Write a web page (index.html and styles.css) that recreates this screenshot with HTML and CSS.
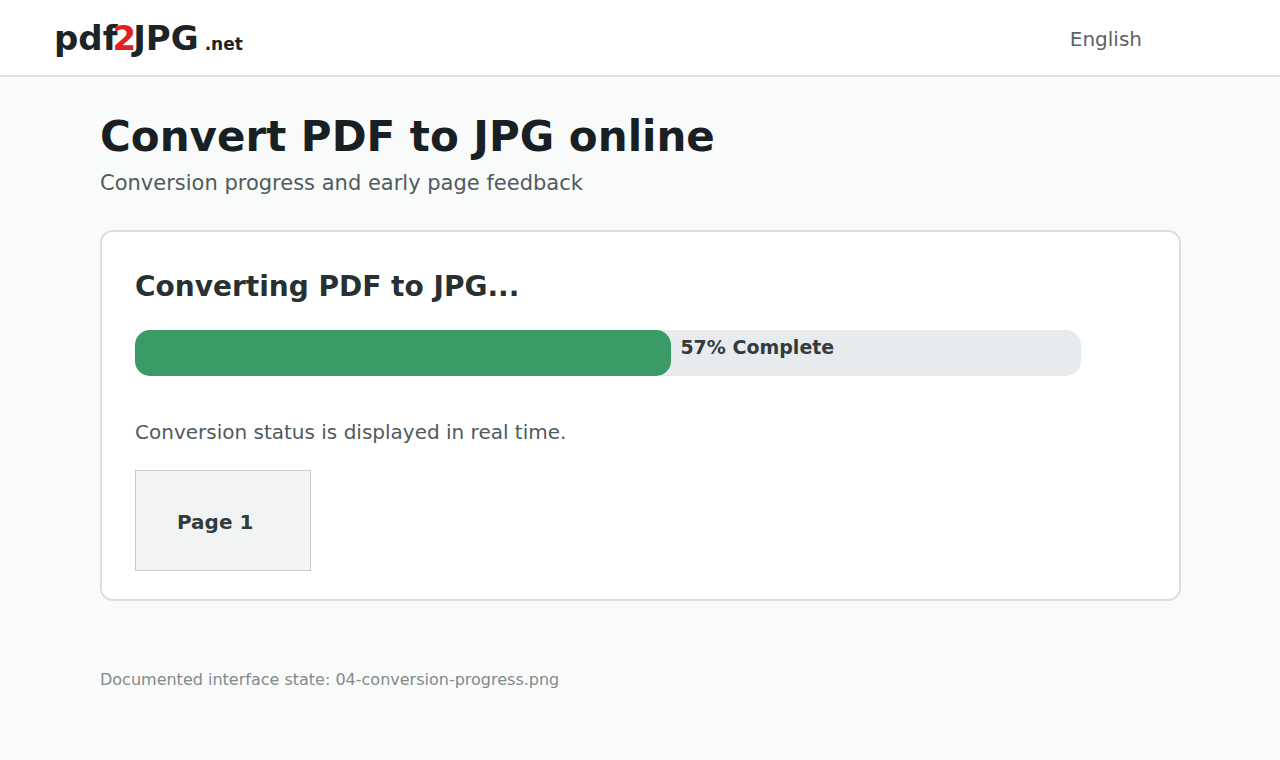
FILE: index.html
```
<!DOCTYPE html>
<html lang="en">
<head>
<meta charset="UTF-8" />
<meta name="viewport" content="width=device-width, initial-scale=1.0" />
<title>Convert PDF to JPG online</title>
<link rel="stylesheet" href="styles.css">
</head>
<body>

<header class="topbar">
  <a class="logo" href="#"><span>pdf</span><span class="two">2</span><span class="jpg">JPG</span><span class="net">.net</span></a>
  <a class="lang" href="#">English</a>
</header>

<main class="content">
  <h1>Convert PDF to JPG online</h1>
  <p class="subtitle">Conversion progress and early page feedback</p>

  <section class="card">
    <h2>Converting PDF to JPG...</h2>
    <div class="progress" role="progressbar" aria-label="Conversion" aria-valuemin="0" aria-valuemax="100" aria-valuenow="57">
      <div class="bar" style="width: 56.7%"></div>
      <span class="percent">57% Complete</span>
    </div>
    <p class="status">Conversion status is displayed in real time.</p>
    <div class="page">Page 1</div>
  </section>

  <p class="note">Documented interface state: 04-conversion-progress.png</p>
</main>

</body>
</html>
```
FILE: styles.css
```
* { box-sizing: border-box; }
body { margin: 0; font-family: "DejaVu Sans", Verdana, sans-serif; background: #f9fbfa; color: #182024; }
h1, h2, p { margin: 0; }
a { color: inherit; text-decoration: none; }

.topbar { display: flex; justify-content: space-between; align-items: flex-start; min-height: 77px; padding: 18px 138px 0 54px; background: #fff; border-bottom: 2px solid #dfe1e5; }
.logo { display: flex; align-items: baseline; font-size: 34px; line-height: 40px; font-weight: bold; color: #1c2426; }
.two { margin-left: -5px; color: #e02024; }
.jpg { margin-left: -3px; }
.net { margin-left: 6px; font-size: 17px; }
.lang { padding-top: 9px; font-size: 20px; line-height: 24px; color: #5a6464; }

.content { padding: 35px 99px 0 100px; }
h1 { font-size: 42px; line-height: 50px; }
.subtitle { margin-top: 9px; font-size: 21px; line-height: 24px; color: #505a5f; }

.card { margin-top: 35px; padding: 39px 33px 28px; background: #fff; border: 2px solid #dadee1; border-radius: 13px; }
h2 { font-size: 28px; line-height: 32px; color: #283032; }
.progress { display: flex; height: 46px; margin: 27px 65px 0 0; background: #e7ebee; border-radius: 15px; }
.bar { background: #3a9b66; border-radius: 15px; }
.percent { margin-left: 9px; padding-top: 5px; font-size: 19px; line-height: 24px; font-weight: bold; color: #323c3e; }
.status { margin-top: 44px; font-size: 20px; line-height: 24px; color: #505a5f; }
.page { width: 176px; margin-top: 26px; padding: 40px 41px 36px; background: #f2f4f3; border: 1px solid #c8cccc; font-size: 20px; line-height: 23px; font-weight: bold; color: #323c3e; }

.note { margin-top: 69px; font-size: 16px; line-height: 20px; color: #828a8c; }
```
